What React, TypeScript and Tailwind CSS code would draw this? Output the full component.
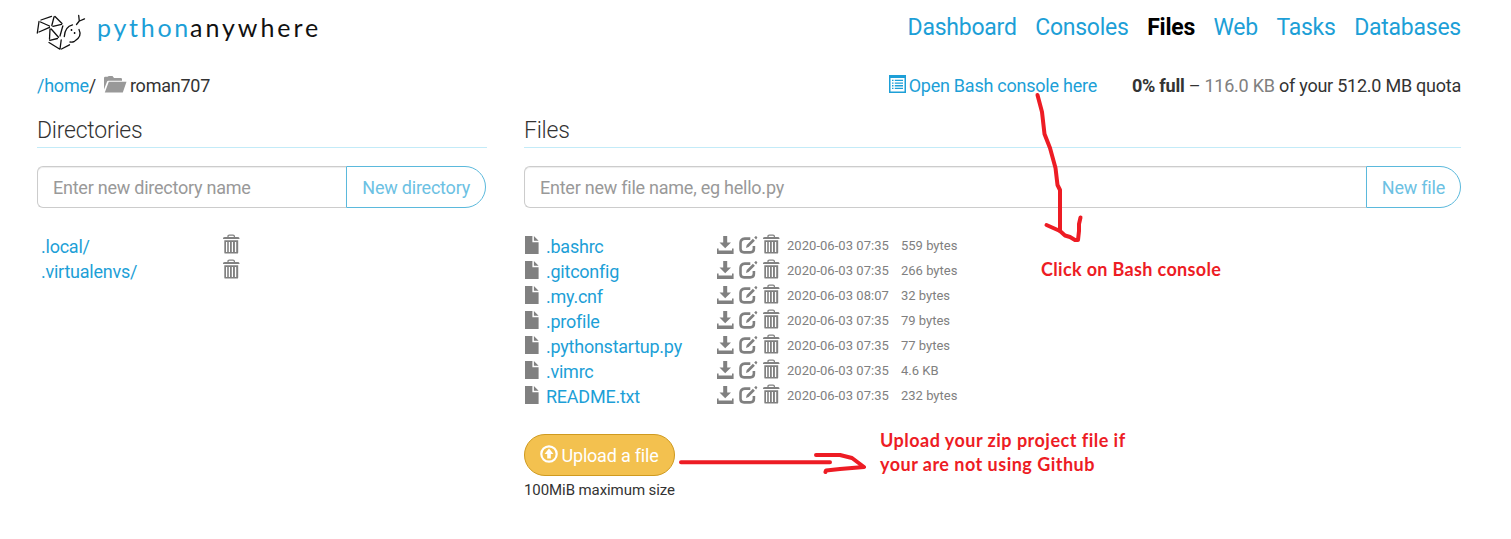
import React from "react";

const files = [
  [".bashrc", "2020-06-03 07:35", "559 bytes"],
  [".gitconfig", "2020-06-03 07:35", "266 bytes"],
  [".my.cnf", "2020-06-03 08:07", "32 bytes"],
  [".profile", "2020-06-03 07:35", "79 bytes"],
  [".pythonstartup.py", "2020-06-03 07:35", "77 bytes"],
  [".vimrc", "2020-06-03 07:35", "4.6 KB"],
  ["README.txt", "2020-06-03 07:35", "232 bytes"],
];

const directories = [".local/", ".virtualenvs/"];
const navItems = ["Dashboard", "Consoles", "Files", "Web", "Tasks", "Databases"];

function Trash() {
  return (
    <svg className="block h-[20px] w-[17px] text-[#808080]" viewBox="0 0 17 20" fill="none" stroke="currentColor">
      <path d="M5 3.2V2.4Q5 1.2 6.2 1.2H10Q11.4 1.2 11.4 2.4V3.2" strokeWidth="1.3" />
      <path d="M0 4.4Q0 3 2 3H14.5Q16.5 3 16.5 4.4V5H0Z" fill="currentColor" stroke="none" />
      <path d="M1.3 6.2H15.2V18.4Q15.2 19.6 14 19.6H2.5Q1.3 19.6 1.3 18.4ZM3 8V18H4.2V8ZM5.8 8V18H7V8ZM8.8 8V18H10V8ZM11.9 8V18H13.2V8Z" fill="currentColor" fillRule="evenodd" stroke="none" />
    </svg>
  );
}

function Download() {
  return (
    <svg className="block h-[20px] w-[17px] text-[#808080]" viewBox="0 0 17 20" fill="currentColor">
      <path d="M6.2 2H10.2V8.4H14L8.2 14.2L2.5 8.4H6.2ZM0 14.6H1.6V16.6H15V14.6H16.6V20H0Z" />
    </svg>
  );
}

function Edit() {
  return (
    <svg className="block h-[20px] w-[19px] text-[#808080]" viewBox="0 0 19 20">
      <path d="M11.3 4.6H5.8Q1.5 5 1.5 9V14.8Q1.5 18.4 5 18.4H11.3Q14.9 18.4 14.9 14.8V12" fill="none" stroke="currentColor" strokeWidth="2.6" />
      <path d="M13.9 4.8L15.9 6.8L9.6 13.1L7 13.9L7.7 11ZM15.2 3.6L16.5 2.3Q17 1.9 17.6 2.4L18.1 2.9Q18.6 3.5 18.1 4.1L17.1 5.4Z" fill="currentColor" />
    </svg>
  );
}

function FileIcon() {
  return (
    <svg className="block h-[18px] w-[14px] text-[#808080]" viewBox="0 0 14 18" fill="currentColor">
      <path d="M0 0H7.4V6.3H13.6V18H0ZM8.9 0L13.6 4.8H8.9Z" />
    </svg>
  );
}

function Logo() {
  return (
    <svg className="block h-[50px] w-[290px]" viewBox="35 5 290 50">
      <g fill="none" stroke="#111" strokeWidth="1.3" strokeLinecap="round">
        <path d="M39 21.5L37.3 33M41 20L51.5 16.3M40.5 22L49.5 26M39 32L49.5 27.3M54 17L51.8 25.5M55 16.5L62 23.5M53 26.3L61.5 24.3M50 29L49.5 39M51.2 29L58.5 37.2M62.8 26L60 36M49.8 40.3L57.5 38.5M49 42.5L59.5 49M61.2 40L60 49M61.5 49L69.5 44.8" />
        <path d="M72.5 24.8Q65 26.5 64.3 36.5M79 29.5Q82.5 36.5 74.5 41.3Q72.5 42.3 70 42M76.5 24.5L79.3 21M79.3 21L78.7 15.5M79.5 21L84.5 18.8" />
      </g>
      <circle cx="71.5" cy="30" r="0.9" />
      <circle cx="74.6" cy="33" r="0.9" />
      <text x="97" y="37.4" textLength="91" fontFamily="Lato, sans-serif" fontSize="25" fill="#1d9fd7">python</text>
      <text x="190" y="37.4" textLength="128" fontFamily="Lato, sans-serif" fontSize="25" fill="#111">anywhere</text>
    </svg>
  );
}

function Heading({ children }: { children: React.ReactNode }) {
  return (
    <h2 className="h-[36px] border-b border-[#c3ebf8] text-[23px] font-light leading-[37px] tracking-[-0.24px] text-[#333]">
      {children}
    </h2>
  );
}

function CreateForm({ placeholder, action }: { placeholder: string; action: string }) {
  return (
    <div className="mt-[18px] flex h-[42px]">
      <input
        className="min-w-0 flex-1 rounded-l-[6px] border border-r-0 border-[#ccc] px-[15px] text-[18px] tracking-[-0.24px] shadow-[inset_0_1px_1px_rgba(0,0,0,0.075)] outline-none placeholder:text-[#999]"
        placeholder={placeholder}
      />
      <button className="rounded-r-[21px] border border-[#5bb9dc] px-[15px] text-[18px] tracking-[-0.22px] text-[#6cc1e3]">{action}</button>
    </div>
  );
}

export default function App() {
  return (
    <div className="relative h-[539px] overflow-hidden bg-white pl-[37px] pr-[50px] font-['Roboto',sans-serif] text-[18px] tracking-[-0.24px] text-[#333]">
      <header className="flex h-[64px] justify-between">
        <div className="-ml-[2px] pt-[5px]"><Logo /></div>
        <nav className="flex gap-[18.5px] pt-[12px] text-[23px] leading-[32px] text-[#1d9fd7]">
          {navItems.map((item) => (
            <a key={item} className={item === "Files" ? "font-bold text-black" : ""}>{item}</a>
          ))}
        </nav>
      </header>

      <div className="flex h-[48px] justify-between leading-[44px]">
        <div className="flex">
          <a className="text-[#1d9fd7]">/home</a>/
          <svg className="ml-[8px] mr-[3px] mt-[12px] h-[17px] w-[23px]" viewBox="0 0 23 17" fill="#999">
            <path d="M0 13.5V2Q0 .8 1.2 .8H3.5L4.8 0H8.5L10 2H16.8Q18 2 18 3.3V4.7H4.4Q3.4 4.7 3 5.7ZM4.8 5.7H22.5L18.8 16.5H.8Z" />
          </svg>
          roman707
        </div>
        <div className="flex">
          <a className="flex text-[#1d9fd7]">
            <svg className="mr-[3px] mt-[11px] h-[18px] w-[17px]" viewBox="0 0 17 18" fill="currentColor">
              <path d="M0 0H17V18H0ZM1.5 3V16.5H15.5V3ZM3 4.7H4.5V6H3ZM5.8 4.7H14V6H5.8ZM3 7.4H4.5V8.7H3ZM5.8 7.4H14V8.7H5.8ZM3 10.1H4.5V11.4H3ZM5.8 10.1H14V11.4H5.8ZM3 12.8H4.5V14.1H3ZM5.8 12.8H14V14.1H5.8Z" fillRule="evenodd" />
            </svg>
            Open Bash console here
          </a>
          <span className="ml-[35px]">
            <b className="font-bold">0% full</b> – <span className="text-[#808080]">116.0 KB</span> of your 512.0 MB quota
          </span>
        </div>
      </div>

      <main className="flex gap-[37px]">
        <section className="w-[450px]">
          <Heading>Directories</Heading>
          <div className="pr-px"><CreateForm placeholder="Enter new directory name" action="New directory" /></div>
          <ul className="mt-[26px] pl-[4px]">
            {directories.map((name) => (
              <li key={name} className="flex h-[25px]">
                <a className="w-[182px] leading-[25px] text-[#1d9fd7]">{name}</a>
                <Trash />
              </li>
            ))}
          </ul>
        </section>

        <section className="flex-1">
          <Heading>Files</Heading>
          <CreateForm placeholder="Enter new file name, eg hello.py" action="New file" />
          <ul className="mt-[26px] pl-[1px]">
            {files.map(([name, date, size]) => (
              <li key={name} className="flex h-[25px]">
                <span className="w-[21px] pt-[2px]"><FileIcon /></span>
                <a className="w-[171px] leading-[25px] text-[#1d9fd7]">{name}</a>
                <span className="w-[22px]"><Download /></span>
                <span className="w-[24px]"><Edit /></span>
                <span className="w-[24px]"><Trash /></span>
                <span className="w-[114px] text-[13px] leading-[23px] tracking-[0.04px] text-[#808080]">{date}</span>
                <span className="text-[13px] leading-[23px] tracking-normal text-[#808080]">{size}</span>
              </li>
            ))}
          </ul>
          <button className="mt-[25px] flex h-[42px] w-[151px] items-center rounded-full border border-[#cf9a1f] bg-[#f3c14f] pl-[15px] text-[18px] tracking-[-0.2px] text-white">
            <svg className="mr-[3.5px] h-[18px] w-[18px] -translate-y-px" viewBox="0 0 18 18">
              <circle cx="9" cy="9" r="7.7" fill="none" stroke="#fff" strokeWidth="2.2" />
              <path d="M9 3.5L13.5 9H10.8V13.6H7.2V9H4.5Z" fill="#fff" />
            </svg>
            Upload a file
          </button>
          <p className="mt-[2px] text-[15px] leading-[25px] tracking-[-0.08px]">100MiB maximum size</p>
        </section>
      </main>

      <svg className="pointer-events-none absolute left-0 top-0 h-[539px] w-[1511px]" viewBox="0 0 1511 539" fill="none" stroke="#ed1c24" strokeWidth="4" strokeLinejoin="round" strokeLinecap="round">
        <path d="M1037.5 95L1042 112L1044.500 134L1050 148L1055.500 168L1057.500 185L1060 190V231" />
        <path d="M1046.500 225L1060 231L1065 235.500L1070 237L1075 240H1078L1079 231V224L1080.500 217.500" />
        <path d="M681 462.200H830M816 455H840L852 458L864 467L840 469L826 470.500L825.500 472" />
      </svg>
      <p className="absolute left-[1041px] top-[257px] whitespace-nowrap font-['Lato',sans-serif] text-[18px] font-bold leading-[24px] tracking-[0.34px] text-[#ed1c24]">Click on Bash console</p>
      <p className="absolute left-[880px] top-[428px] whitespace-nowrap font-['Lato',sans-serif] text-[18px] font-bold leading-[24px] tracking-[0.48px] text-[#ed1c24]">Upload your zip project file if<br />your are not using Github</p>
    </div>
  );
}
